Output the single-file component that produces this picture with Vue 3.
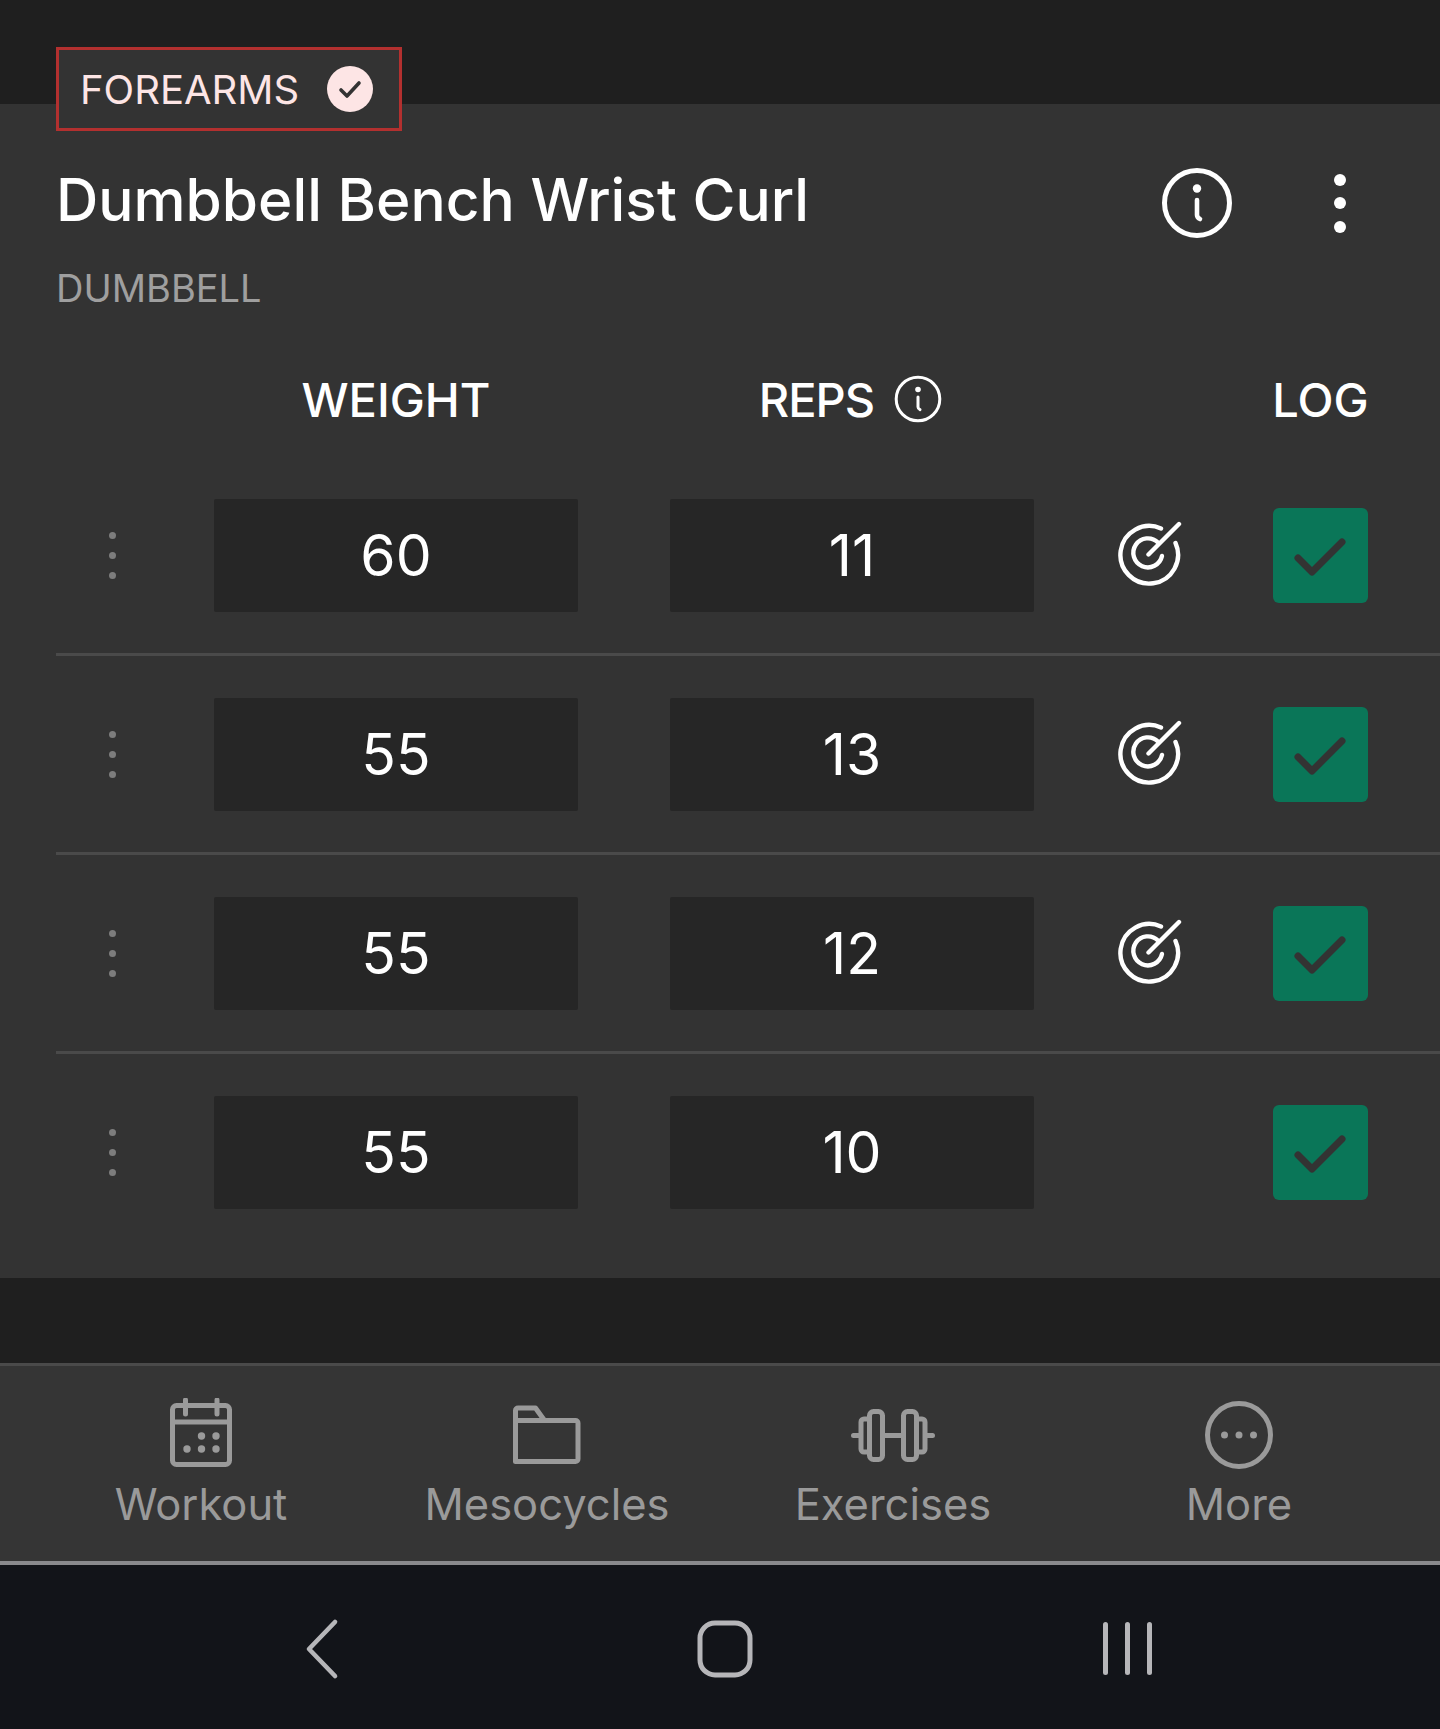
<script setup>
const rows = [
  { weight: 60, reps: 11, target: true },
  { weight: 55, reps: 13, target: true },
  { weight: 55, reps: 12, target: true },
  { weight: 55, reps: 10, target: false },
];
</script>

<template>
  <div class="page">
    <section class="card">
      <div class="tag">
        <span class="tag-name">FOREARMS</span>
        <svg class="tag-check" width="46" height="46" viewBox="0 0 46 46">
          <circle cx="23" cy="23" r="23" fill="#fde5e5" />
          <path d="M14 24l6 6 12-13" fill="none" stroke="#333" stroke-width="3.6" stroke-linecap="round" stroke-linejoin="round" />
        </svg>
      </div>

      <div class="title-row">
        <h1>Dumbbell Bench Wrist Curl</h1>
        <div class="title-icons">
          <svg width="72" height="72" viewBox="0 0 72 72" fill="none" stroke="#fff">
            <circle cx="36" cy="36" r="32.5" stroke-width="5" />
            <circle cx="36" cy="21.5" r="4.2" fill="#fff" stroke="none" />
            <path d="M36 33v15c0 2 1 3 3 4" stroke-width="4.6" stroke-linecap="round" />
          </svg>
          <svg width="14" height="60" viewBox="0 0 14 60" fill="#fff">
            <circle cx="7" cy="7" r="6" />
            <circle cx="7" cy="30" r="6" />
            <circle cx="7" cy="54" r="6" />
          </svg>
        </div>
      </div>
      <p class="equipment">DUMBBELL</p>

      <div class="grid head">
        <span></span>
        <span class="col-title">WEIGHT</span>
        <span class="col-title reps-title">
          <span class="reps-label">REPS</span>
          <svg width="48" height="48" viewBox="0 0 48 48" fill="none" stroke="#fff">
            <circle cx="24" cy="24" r="21.8" stroke-width="3" />
            <circle cx="24" cy="14.5" r="2.8" fill="#fff" stroke="none" />
            <path d="M24 22v10c0 1.4.7 2 2 2.600" stroke-width="3" stroke-linecap="round" />
          </svg>
        </span>
        <span></span>
        <span class="col-title">LOG</span>
      </div>

      <div v-for="(row, i) in rows" :key="i" class="grid row" :class="{ last: i === rows.length - 1 }">
        <div class="drag"><i></i><i></i><i></i></div>
        <div class="field">{{ row.weight }}</div>
        <div class="field reps-field">{{ row.reps }}</div>
        <div class="target">
          <svg v-if="row.target" width="66" height="66" viewBox="0 0 66 66" fill="none" stroke="#fff" stroke-width="4.4" stroke-linecap="round">
            <path d="M45 7.500A28.800 28.800 0 1 0 59.500 22" />
            <path d="M42 21.500A14.500 14.500 0 1 0 46 35" />
            <path d="M32.500 33.500L63 3" />
          </svg>
        </div>
        <div class="check">
          <svg width="95" height="95" viewBox="0 0 95 95" fill="none">
            <path d="M25 50l14 14 30-30" stroke="#333" stroke-width="7" stroke-linecap="round" stroke-linejoin="round" />
          </svg>
        </div>
      </div>
    </section>

    <nav class="tabs">
      <div class="tab">
        <svg width="80" height="72" viewBox="0 0 80 72" fill="none" stroke="#9a9a9a" stroke-width="5">
          <rect x="11.500" y="7.500" width="57" height="59" rx="4" />
          <path d="M11 24h58" />
          <path d="M24.500 2v14M56 2v14" stroke-linecap="round" />
          <g fill="#9a9a9a" stroke="none">
            <circle cx="40.500" cy="38" r="3.700" />
            <circle cx="55" cy="38" r="3.700" />
            <circle cx="26" cy="51" r="3.700" />
            <circle cx="40.500" cy="51" r="3.700" />
            <circle cx="55" cy="51" r="3.700" />
          </g>
        </svg>
        <span>Workout</span>
      </div>
      <div class="tab">
        <svg width="80" height="72" viewBox="0 0 80 72" fill="none" stroke="#9a9a9a" stroke-width="5" stroke-linejoin="round">
          <path d="M8.500 63.500V12.500a2.500 2.500 0 0 1 2.500-2.500h17.500l9 12.500h31a2.500 2.500 0 0 1 2.500 2.500v36a2.500 2.500 0 0 1-2.500 2.500z" />
          <path d="M9 22.500h28" />
        </svg>
        <span>Mesocycles</span>
      </div>
      <div class="tab">
        <svg width="88" height="72" viewBox="0 0 88 72" fill="none" stroke="#9a9a9a" stroke-width="5" stroke-linecap="round">
          <rect x="20.500" y="13.500" width="13" height="48" rx="4" />
          <rect x="54.500" y="13.500" width="13" height="48" rx="4" />
          <path d="M20.500 21H15a3 3 0 0 0-3 3v27a3 3 0 0 0 3 3h5.500" />
          <path d="M67.500 21H73a3 3 0 0 1 3 3v27a3 3 0 0 1-3 3h-5.500" />
          <path d="M33.500 37.500h21M4.500 37.500h7M76.500 37.500h7" />
        </svg>
        <span>Exercises</span>
      </div>
      <div class="tab">
        <svg width="80" height="72" viewBox="0 0 80 72" fill="none" stroke="#9a9a9a" stroke-width="5">
          <circle cx="40" cy="37" r="31.500" />
          <g fill="#9a9a9a" stroke="none">
            <circle cx="25.500" cy="37" r="3.500" />
            <circle cx="40" cy="37" r="3.500" />
            <circle cx="54.500" cy="37" r="3.500" />
          </g>
        </svg>
        <span>More</span>
      </div>
    </nav>

    <div class="system-nav">
      <svg width="40" height="64" viewBox="0 0 40 64" fill="none" stroke="#b6b6b9" stroke-width="4.600" stroke-linecap="round" stroke-linejoin="round">
        <path d="M33 5L7 32l26 27" />
      </svg>
      <svg width="58" height="60" viewBox="0 0 58 60" fill="none" stroke="#b6b6b9" stroke-width="5">
        <rect x="4" y="4" width="50" height="52" rx="15" />
      </svg>
      <div class="recents"><i></i><i></i><i></i></div>
    </div>
  </div>
</template>

<style>
html, body {
  margin: 0;
  background: #121419;
}
</style>

<style scoped>
.page {
  width: 1440px;
  height: 1729px;
  background: #1f1f1f;
  font-family: Inter, "Liberation Sans", sans-serif;
  color: #fff;
  display: flex;
  flex-direction: column;
  padding-top: 104px;
  box-sizing: border-box;
  overflow: hidden;
}

.card {
  background: #333;
  height: 1174px;
  flex: none;
  box-sizing: border-box;
}

.tag {
  margin: -57px 0 0 56px;
  width: 346px;
  height: 84px;
  box-sizing: border-box;
  border: 3px solid #b3302f;
  background: #333;
  display: flex;
  align-items: center;
  padding-left: 21px;
}

.tag-name {
  font-size: 40px;
  font-weight: 400;
  color: #fde5e5;
  width: 247px;
  flex: none;
}

.title-row {
  display: flex;
  align-items: center;
  justify-content: space-between;
  margin: 29px 0 0 56px;
  padding-right: 93px;
  height: 80px;
}

h1 {
  margin: 0;
  font-size: 58.6px;
  font-weight: 500;
  line-height: 80px;
  white-space: nowrap;
}

.title-icons {
  display: flex;
  align-items: center;
  gap: 100px;
  margin-top: 5px;
}

.equipment {
  margin: 25px 0 0 56px;
  font-size: 38px;
  line-height: 46px;
  color: #9f9f9f;
}

.grid {
  display: grid;
  grid-template-columns: 158px 364px 456px 239px 95px;
  margin-left: 56px;
  align-items: center;
}

.reps-field {
  margin-left: 92px;
}

.reps-title {
  margin-left: 89px;
}

.reps-label {
  letter-spacing: -1px;
}

.head {
  margin-top: 58px;
  margin-bottom: 28px;
  height: 60px;
}

.col-title {
  font-size: 47px;
  font-weight: 500;
  display: flex;
  justify-content: center;
  align-items: center;
  gap: 20px;
}

.row {
  padding: 42px 0 41px;
  border-bottom: 3px solid #4a4a4a;
}

.row.last {
  border-bottom: none;
}

.drag {
  width: 112px;
  display: flex;
  flex-direction: column;
  align-items: center;
  gap: 13px;
}

.drag i {
  width: 7px;
  height: 7px;
  border-radius: 50%;
  background: #7d7d7d;
}

.field {
  height: 113px;
  background: #262626;
  border-radius: 2px;
  display: flex;
  align-items: center;
  justify-content: center;
  font-size: 57px;
  font-weight: 400;
}

.target {
  display: flex;
  justify-content: center;
  padding-right: 10px;
  height: 66px;
  margin-bottom: 3px;
}

.check {
  width: 95px;
  height: 95px;
  border-radius: 6px;
  background: #0a7658;
}

.check svg {
  display: block;
}

.tabs {
  margin-top: 85px;
  height: 202px;
  flex: none;
  box-sizing: border-box;
  border-top: 3px solid #4a4a4a;
  border-bottom: 4px solid #8a8a8d;
  background: #353535;
  display: grid;
  grid-template-columns: repeat(4, 346px);
  padding: 32px 28px 0;
}

.tab {
  display: flex;
  flex-direction: column;
  align-items: center;
  color: #9a9a9a;
  font-size: 43.5px;
  line-height: 60px;
}

.tab svg {
  display: block;
  margin-bottom: 4px;
}

.system-nav {
  flex: 1;
  background: #121419;
  display: grid;
  grid-template-columns: repeat(3, 403px);
  justify-items: center;
  align-items: center;
  padding: 3px 0 0 120px;
  box-sizing: border-box;
}

.recents {
  display: flex;
  gap: 17px;
}

.recents i {
  width: 5px;
  height: 53px;
  border-radius: 3px;
  background: #b6b6b9;
}
</style>
